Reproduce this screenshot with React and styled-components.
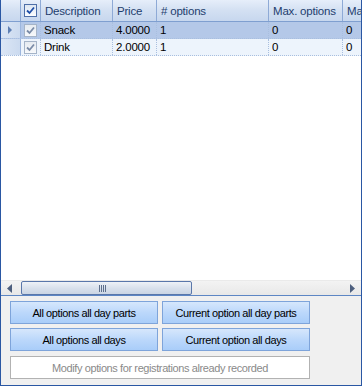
import React from 'react';
import styled, { createGlobalStyle } from 'styled-components';

const Global = createGlobalStyle`
    html, body {
        margin: 0;
        padding: 0;
        background: #fff;
    }
    * {
        box-sizing: border-box;
    }
`;

const columns = [
    { key: 'rh', width: 20 },
    { key: 'check', width: 20 },
    { key: 'desc', width: 72, title: 'Description' },
    { key: 'price', width: 44, title: 'Price' },
    { key: 'opts', width: 112, title: '# options' },
    { key: 'max', width: 74, title: 'Max. options' },
    { key: 'ma', width: 40, title: 'Ma' },
];

const rows = [
    { desc: 'Snack', price: '4.0000', opts: '1', max: '0', ma: '0', selected: true },
    { desc: 'Drink', price: '2.0000', opts: '1', max: '0', ma: '0' },
];

const Frame = styled.div`
    width: 362px;
    height: 386px;
    border: 1px solid #2a57a3;
    border-top: none;
    background: #f0f0f0;
    display: flex;
    flex-direction: column;
    font-family: "Liberation Sans", Arial, sans-serif;
    font-size: 11.5px;
    letter-spacing: -0.2px;
    overflow: hidden;
`;

const Grid = styled.div`
    height: 296px;
    display: flex;
    flex-direction: column;
    background: #fff;
    border-bottom: 1px solid #5d86c4;
    overflow: hidden;
`;

const Body = styled.div`
    flex: 1;
    overflow: hidden;
`;

const HeaderRow = styled.div`
    display: flex;
    height: 22px;
    background: linear-gradient(#e6eefa, #d3e0f2 50%, #c7d7ee);
    border-bottom: 1px solid #7f9fd0;
    color: #1e3d6e;
`;

const HeaderCell = styled.div`
    flex: 0 0 ${p => p.$w}px;
    display: flex;
    align-items: center;
    padding-left: ${p => p.$center ? 0 : 4}px;
    justify-content: ${p => p.$center ? 'center' : 'flex-start'};
    border-right: 1px solid #8eaad6;
    white-space: nowrap;
    overflow: hidden;
    &:last-child {
        border-right: none;
    }
`;

const Row = styled.div`
    display: flex;
    height: 17px;
    background: ${p => p.$selected ? '#b4c8e8' : '#edf4fc'};
    border-bottom: 1px dotted #a9bfdf;
    color: #000;
`;

const Cell = styled.div`
    flex: 0 0 ${p => p.$w}px;
    display: flex;
    align-items: center;
    padding-left: ${p => p.$center ? 0 : 3}px;
    justify-content: ${p => p.$center ? 'center' : 'flex-start'};
    border-right: 1px dotted #a9bfdf;
    white-space: nowrap;
    overflow: hidden;
    &:last-child {
        border-right: none;
    }
`;

const RowHeaderCell = styled.div`
    flex: 0 0 ${p => p.$w}px;
    display: flex;
    align-items: center;
    justify-content: center;
    background: linear-gradient(90deg, #dbe6f5, #cbdaef);
    border-right: 1px solid #9db6dd;
`;

const Pointer = styled.span`
    width: 0;
    height: 0;
    border-top: 4px solid transparent;
    border-bottom: 4px solid transparent;
    border-left: 4px solid #5d7fb4;
    margin-left: -2px;
`;

const Box = styled.span`
    width: 13px;
    height: 13px;
    border: 1px solid ${p => p.$disabled ? '#a5b4c8' : '#4e6fa8'};
    background: ${p => p.$disabled ? 'linear-gradient(#e6ebf1, #f7f9fb)' : 'linear-gradient(#dde6f2, #fbfdff)'};
    display: flex;
    align-items: center;
    justify-content: center;
`;

const Check = ({ disabled }) => (
    <Box $disabled={disabled}>
        <svg width="9" height="9" viewBox="0 0 9 9">
            <path d="M1 4.5 L3.5 7 L8 1.5" fill="none" stroke={disabled ? '#7a8ca8' : '#1f4fa8'} strokeWidth="1.8" />
        </svg>
    </Box>
);

const ScrollBar = styled.div`
    display: flex;
    align-items: center;
    height: 15px;
    background: linear-gradient(#f3f3f3, #e8e8e8);
    border-top: 1px solid #eaeaea;
`;

const Arrow = styled.div`
    flex: 0 0 17px;
    height: 100%;
    display: flex;
    align-items: center;
    justify-content: center;
`;

const Track = styled.div`
    flex: 1;
    height: 100%;
    display: flex;
    align-items: center;
    padding-left: 3px;
`;

const Thumb = styled.div`
    width: 171px;
    height: 14px;
    border: 1px solid #5a77aa;
    border-radius: 2px;
    background: linear-gradient(#eef2f7, #d9e1ec 50%, #cbd5e3);
    display: flex;
    align-items: center;
    justify-content: center;
    padding-right: 8px;
`;

const Grip = styled.span`
    width: 8px;
    height: 7px;
    background: repeating-linear-gradient(90deg, #5d6f8c 0 1px, transparent 1px 2px);
`;

const Panel = styled.div`
    flex: 1;
    display: grid;
    grid-template-columns: 148px 148px;
    grid-template-rows: 23px 23px 24px;
    column-gap: 4px;
    row-gap: 4px;
    padding: 5px 0 0 9px;
    align-content: start;
`;

const Button = styled.div`
    display: flex;
    align-items: center;
    justify-content: center;
    border: 1px solid #7ea4da;
    background: linear-gradient(#d6e7fc, #bcd8fb 50%, #a9cdf9);
    color: #000;
    font-size: 11px;
    letter-spacing: -0.4px;
    white-space: nowrap;
`;

const WideButton = styled(Button)`
    grid-column: 1 / 3;
    margin-top: 1px;
    border-color: #b2b2b2;
    background: #fff;
    color: #8a8a8a;
`;

const App = () => (
    <>
        <Global />
        <Frame>
            <Grid>
                <HeaderRow>
                    <HeaderCell $w={columns[0].width} />
                    <HeaderCell $w={columns[1].width} $center><Check /></HeaderCell>
                    {columns.slice(2).map(c => (
                        <HeaderCell key={c.key} $w={c.width}>{c.title}</HeaderCell>
                    ))}
                </HeaderRow>
                <Body>
                    {rows.map(r => (
                        <Row key={r.desc} $selected={r.selected}>
                            <RowHeaderCell $w={columns[0].width}>{r.selected && <Pointer />}</RowHeaderCell>
                            <Cell $w={columns[1].width} $center><Check disabled /></Cell>
                            {columns.slice(2).map(c => (
                                <Cell key={c.key} $w={c.width}>{r[c.key]}</Cell>
                            ))}
                        </Row>
                    ))}
                </Body>
                <ScrollBar>
                    <Arrow>
                        <svg width="5" height="9" viewBox="0 0 5 9"><path d="M5 0 L0 4.5 L5 9 Z" fill="#4d5f7e" /></svg>
                    </Arrow>
                    <Track>
                        <Thumb><Grip /></Thumb>
                    </Track>
                    <Arrow>
                        <svg width="5" height="9" viewBox="0 0 5 9"><path d="M0 0 L5 4.5 L0 9 Z" fill="#4d5f7e" /></svg>
                    </Arrow>
                </ScrollBar>
            </Grid>
            <Panel>
                <Button>All options all day parts</Button>
                <Button>Current option all day parts</Button>
                <Button>All options all days</Button>
                <Button>Current option all days</Button>
                <WideButton>Modify options for registrations already recorded</WideButton>
            </Panel>
        </Frame>
    </>
);

export default App;
